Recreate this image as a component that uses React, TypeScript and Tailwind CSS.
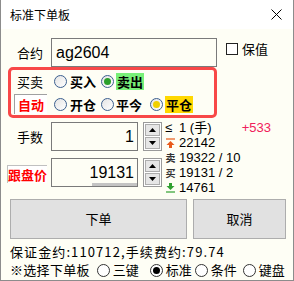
import React from 'react';

const cjk = { fontFamily: '"Noto Sans CJK SC", "Noto Sans", sans-serif' };
const latin = { fontFamily: '"Liberation Sans", "Noto Sans CJK SC", sans-serif' };

const Radio = ({ checked = false, dot = '#000', fancy = false }: { checked?: boolean; dot?: string; fancy?: boolean }) => (
  <span
    className={`inline-flex items-center justify-center w-[13px] h-[13px] rounded-full shrink-0 border ${
      fancy ? 'border-[#3b5f8f] bg-gradient-to-br from-[#e4e4e4] to-white' : 'border-[#333] bg-white'
    }`}
  >
    {checked && <span className="w-[7px] h-[7px] rounded-full" style={{ background: dot }} />}
  </span>
);

const Spin = () => (
  <div className="flex flex-col w-[19px] h-[29px] border border-[#9a9a9a] bg-white p-px gap-px ml-[5px]">
    <div className="flex-1 flex items-center justify-center bg-[#e6e6e6] border border-[#adadad]">
      <svg width="7" height="4" viewBox="0 0 7 4"><path d="M0 4 L3.5 0 L7 4 Z" fill="#000" /></svg>
    </div>
    <div className="flex-1 flex items-center justify-center bg-[#e6e6e6] border border-[#adadad]">
      <svg width="7" height="4" viewBox="0 0 7 4"><path d="M0 0 L3.5 4 L7 0 Z" fill="#000" /></svg>
    </div>
  </div>
);

const InfoLine = ({ icon, text }: { icon: React.ReactNode; text: string }) => (
  <div className="flex items-center h-[15px] gap-[3px]">
    <span className="w-[11px] flex justify-center">{icon}</span>
    <span className="text-[13px] leading-none text-black" style={latin}>{text}</span>
  </div>
);

export default function App() {
  return (
    <div className="w-[294px] h-[281px] flex flex-col border-l border-r border-b border-[#8c8c8c] bg-[#fefef5] overflow-hidden" style={cjk}>
      {/* title */}
      <div className="h-[29px] bg-white flex items-center justify-between pl-[9px] pr-[11px] shrink-0">
        <span className="text-[12px] text-black">标准下单板</span>
        <svg width="11" height="11" viewBox="0 0 11 11"><path d="M0.5 0.5 L10.5 10.5 M10.5 0.5 L0.5 10.5" stroke="#000" strokeWidth="1" /></svg>
      </div>

      <div className="flex flex-col pt-[9px]">
        {/* 合约 */}
        <div className="flex items-start h-[29px]">
          <span className="w-[50px] pl-[16px] text-[13px] leading-[29px] text-black">合约</span>
          <div className="w-[166px] h-[29px] border border-[#7a7a7a] bg-[#fefef5] flex items-center pl-[4px]">
            <span className="text-[16px] text-black" style={latin}>ag2604</span>
          </div>
          <div className="flex items-center ml-[9px] mt-[1px] gap-[4px]">
            <span className="w-[12px] h-[12px] border border-[#222] bg-white" />
            <span className="text-[13px] text-black">保值</span>
          </div>
        </div>

        {/* red box */}
        <div className="ml-[7px] w-[209px] h-[51px] border-[3px] border-[#f84848] rounded-[5px] flex flex-col pt-[2px]">
          <div className="flex items-center h-[20px]">
            <span className="w-[43px] pl-[6px] text-[13px] text-black">买卖</span>
            <Radio fancy />
            <span className="ml-[3px] text-[13px] font-bold text-black">买入</span>
            <span className="ml-[5px] flex"><Radio fancy checked dot="#2ba02b" /></span>
            <span className="ml-[2px] px-[1px] bg-[#78f078] text-[13px] font-bold text-black leading-[17px]">卖出</span>
          </div>
          <div className="flex items-center h-[22px] mt-[2px]">
            <span className="ml-[3px] w-[33px] h-[20px] border-t border-l border-[#a0a0a0] bg-white text-[13px] font-bold text-[#ff0000] flex items-center justify-center leading-none">自动</span>
            <span className="ml-[7px] flex"><Radio fancy /></span>
            <span className="ml-[3px] text-[13px] font-bold text-black">开仓</span>
            <span className="ml-[5px] flex"><Radio fancy /></span>
            <span className="ml-[2px] text-[13px] font-bold text-black">平今</span>
            <span className="ml-[8px] flex"><Radio fancy checked dot="#f0d000" /></span>
            <span className="ml-[2px] px-[1px] bg-[#ffd800] text-[13px] font-bold text-black leading-[17px]">平仓</span>
          </div>
        </div>

        {/* 手数 / 跟盘价 + info */}
        <div className="flex mt-[4px]">
          <div className="flex flex-col gap-[7px]">
            <div className="flex items-center">
              <span className="w-[50px] pl-[16px] text-[13px] text-black">手数</span>
              <div className="w-[87px] h-[29px] border border-[#7a7a7a] flex items-center justify-end pr-[3px]">
                <span className="text-[16px] text-black" style={latin}>1</span>
              </div>
              <Spin />
            </div>
            <div className="flex items-center">
              <span className="w-[50px] pl-[6px]">
                <span className="inline-block w-[40px] h-[18px] bg-white border-t border-l border-[#c0c0c0] text-[13px] font-bold text-[#ff0000] leading-[18px] text-center">跟盘价</span>
              </span>
              <div className="relative w-[87px] h-[29px] border border-[#7a7a7a] flex items-center justify-end pr-[3px]">
                <span className="text-[16px] text-black" style={latin}>19131</span>
                <span className="absolute left-[40px] right-0 bottom-0 h-[3px] bg-[#c4c4c4]" />
              </div>
              <Spin />
            </div>
          </div>

          <div className="flex flex-col ml-[3px] mt-[-2px] flex-1 pr-[22px]">
            <div className="flex items-center h-[15px]">
              <span className="w-[14px] text-[13px] leading-none" style={latin}>≤</span>
              <span className="text-[13px] leading-none" style={latin}>1 (手)</span>
              <span className="ml-auto text-[13px] leading-none text-[#f0205a]" style={latin}>+533</span>
            </div>
            <InfoLine
              icon={
                <svg width="9" height="10" viewBox="0 0 9 10">
                  <path d="M0 1 H9" stroke="#e85a1a" strokeWidth="1.2" />
                  <path d="M4.5 3 L8.5 7 H6 V10 H3 V7 H0.5 Z" fill="#e85a1a" />
                </svg>
              }
              text="22142"
            />
            <InfoLine icon={<span className="text-[10px] leading-none font-bold text-[#333]">卖</span>} text="19322 / 10" />
            <InfoLine icon={<span className="text-[10px] leading-none font-bold text-[#333]">买</span>} text="19131 / 2" />
            <InfoLine
              icon={
                <svg width="9" height="10" viewBox="0 0 9 10">
                  <path d="M3 0 H6 V3 H8.5 L4.5 7 L0.5 3 H3 Z" fill="#30a030" />
                  <path d="M0 9 H9" stroke="#30a030" strokeWidth="1.2" />
                </svg>
              }
              text="14761"
            />
          </div>
        </div>

        {/* buttons */}
        <div className="flex gap-[6px] pl-[9px] mt-[4px]">
          <button className="w-[177px] h-[40px] bg-[#e1e1e1] border border-[#adadad] text-[13px] text-black">下单</button>
          <button className="w-[93px] h-[40px] bg-[#e1e1e1] border border-[#adadad] text-[13px] text-black">取消</button>
        </div>

        <div className="pl-[9px] mt-[4px] h-[18px] text-[13px] leading-[18px] tracking-[1.1px] text-black whitespace-nowrap">保证金约:110712,手续费约:79.74</div>
        <div className="pl-[9px] flex items-center h-[18px] text-[13px] text-black whitespace-nowrap">
          <span className="tracking-[0.3px]">※选择下单板</span>
          <span className="ml-[7px] mr-[3px] flex"><Radio /></span>
          <span>三键</span>
          <span className="ml-[11px] mr-[3px] flex"><Radio checked /></span>
          <span>标准</span>
          <span className="ml-[3px] mr-[3px] flex"><Radio /></span>
          <span>条件</span>
          <span className="ml-[6px] mr-[3px] flex"><Radio /></span>
          <span>键盘</span>
        </div>
      </div>
    </div>
  );
}
